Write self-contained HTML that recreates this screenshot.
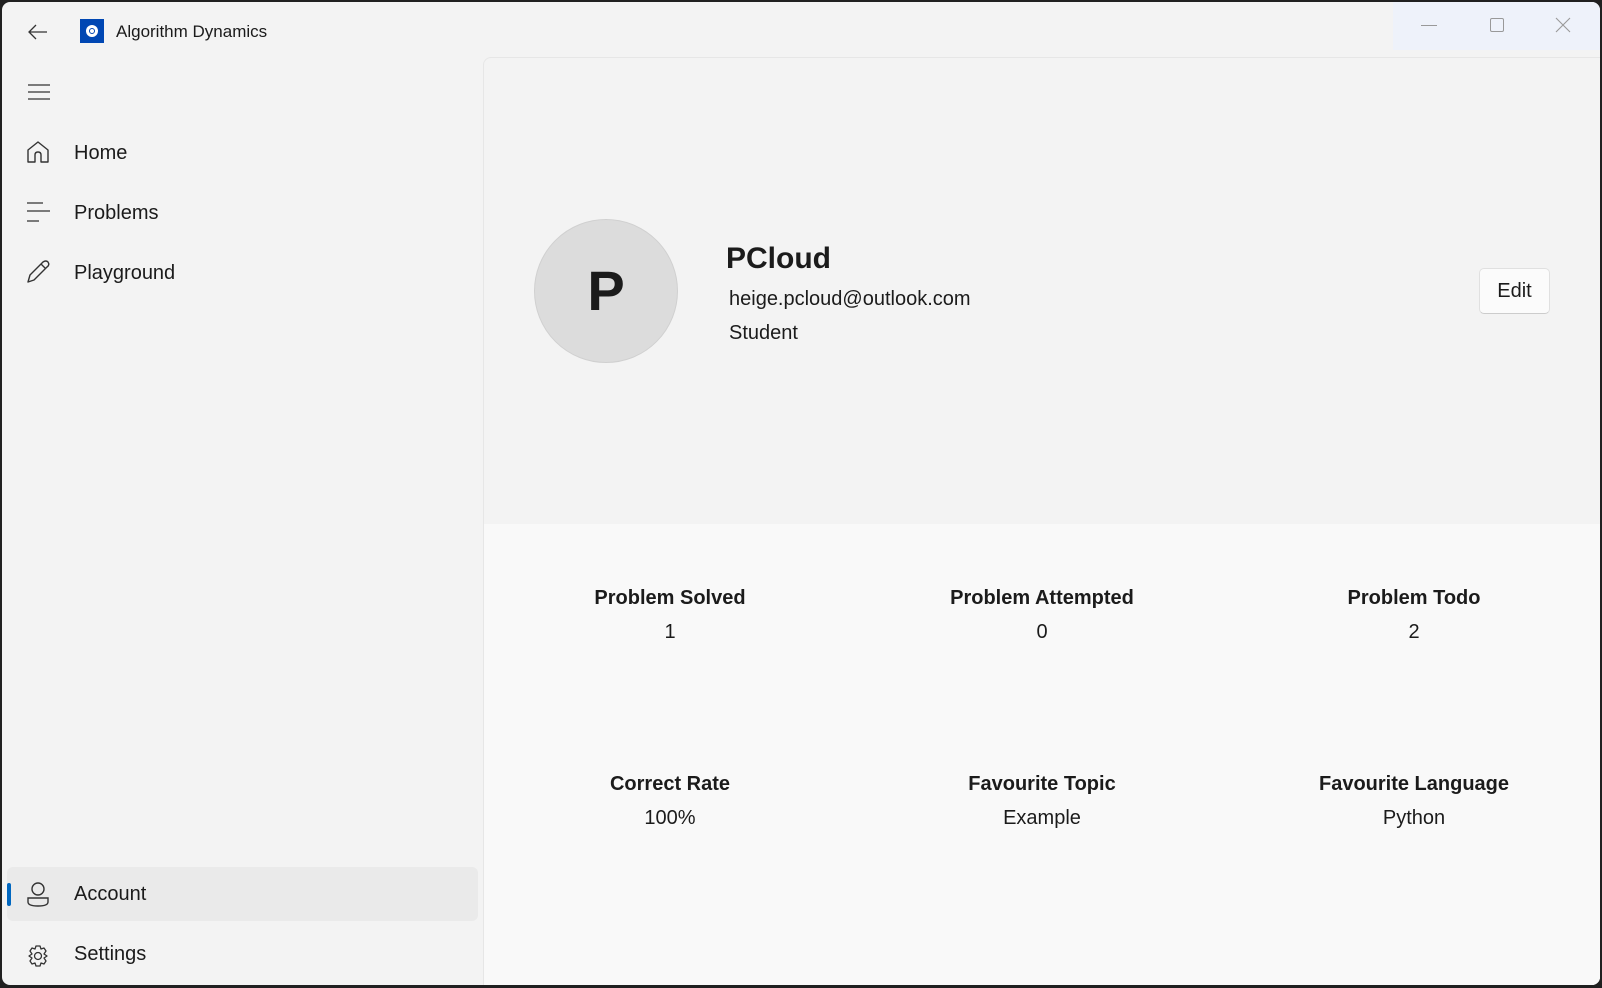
<!DOCTYPE html>
<html><head><meta charset="utf-8"><style>
*{margin:0;padding:0;box-sizing:border-box}
body{width:1602px;height:988px;background:#202020;position:relative;overflow:hidden;font-family:"Segoe UI","Liberation Sans",sans-serif;color:#1b1b1b}
.win{position:absolute;left:2px;top:2px;width:1598px;height:983px;background:#f3f3f3;border-radius:8px;overflow:hidden}
.abs{position:absolute}
.nav{position:absolute;left:72px;font-size:20px;color:#1b1b1b}
.ic{position:absolute}
.content{position:absolute;left:481px;top:55px;width:1120px;height:935px;background:#f3f3f3;border-top-left-radius:8px;border-left:1px solid #e6e6e6;border-top:1px solid #e6e6e6}
.lower{position:absolute;left:0;top:466px;width:100%;height:500px;background:#f9f9f9}
.stat{position:absolute;width:300px;text-align:center;font-size:20px}
.stat b{display:block;font-weight:600}
.stat span{display:block;margin-top:11px}
</style></head><body>
<div class="win">
 <div class="abs" style="left:1391px;top:0;width:207px;height:48px;background:#eef2fa"></div>
 <div class="abs" style="left:1419px;top:23px;width:16px;height:1px;background:#999"></div>
 <div class="abs" style="left:1488px;top:16px;width:14px;height:14px;border:1px solid #999;border-radius:2px"></div>
 <svg class="ic" style="left:1553px;top:15px" width="16" height="16"><path d="M1 1L15 15M15 1L1 15" stroke="#999" stroke-width="1.1"/></svg>
 <svg class="ic" style="left:26px;top:22px" width="20" height="16"><path d="M19 8H2M8 1L1 8L8 15" stroke="#333" stroke-width="1.3" fill="none"/></svg>
 <div class="abs" style="left:78px;top:17px;width:24px;height:24px;background:#0047b3"></div>
 <div class="abs" style="left:84px;top:23px;width:12px;height:12px;border-radius:50%;background:#fff"></div>
 <div class="abs" style="left:87px;top:26px;width:6px;height:6px;border-radius:50%;border:1.5px solid #0047b3"></div>
 <div class="abs" style="left:114px;top:20px;font-size:17px">Algorithm Dynamics</div>
 <svg class="ic" style="left:25px;top:80px" width="24" height="20"><path d="M1 3H23M1 10H23M1 17H23" stroke="#333" stroke-width="1.3"/></svg>
 <svg class="ic" style="left:24px;top:138px" width="24" height="24"><path d="M2 22V10L12 2L22 10V22H15V15Q15 12 12 12Q9 12 9 15V22Z" stroke="#333" stroke-width="1.4" fill="none" stroke-linejoin="round"/></svg>
 <div class="nav" style="top:140px">Home</div>
 <svg class="ic" style="left:23px;top:199px" width="26" height="22"><path d="M2 2H18M2 10H25M2 20H14" stroke="#333" stroke-width="1.3"/></svg>
 <div class="nav" style="top:200px">Problems</div>
 <svg class="ic" style="left:23px;top:257px" width="26" height="26"><path d="M3 23L5 16L18 3Q21 1 23 3Q25 6 22 8L9 21ZM16 5L21 10" stroke="#333" stroke-width="1.4" fill="none" stroke-linejoin="round"/></svg>
 <div class="nav" style="top:260px">Playground</div>
 <div class="abs" style="left:5px;top:865px;width:471px;height:54px;background:#eaeaea;border-radius:6px"></div>
 <div class="abs" style="left:5px;top:881px;width:4px;height:23px;background:#0067c0;border-radius:2px"></div>
 <svg class="ic" style="left:24px;top:880px" width="24" height="26"><circle cx="12" cy="7" r="6" stroke="#333" stroke-width="1.4" fill="none"/><path d="M2 16H22V20Q22 24 12 24Q2 24 2 20Z" stroke="#333" stroke-width="1.4" fill="none"/></svg>
 <div class="nav" style="top:881px">Account</div>
 <svg class="ic" style="left:24px;top:942px" width="24" height="24" viewBox="0 0 24 24"><path d="M10 2H14L15 5L18 4L20 7L18 10L21 12L18 14L20 17L18 20L15 19L14 22H10L9 19L6 20L4 17L6 14L3 12L6 10L4 7L6 4L9 5Z" stroke="#333" stroke-width="1.3" fill="none" stroke-linejoin="round"/><circle cx="12" cy="12" r="3.5" stroke="#333" stroke-width="1.3" fill="none"/></svg>
 <div class="nav" style="top:941px">Settings</div>
 <div class="content">
  <div class="abs" style="left:50px;top:161px;width:144px;height:144px;border-radius:50%;background:#dcdcdc;border:1px solid #d0d0d0;text-align:center;line-height:142px;font-size:56px;font-weight:600">P</div>
  <div class="abs" style="left:242px;top:184px;font-size:30px;font-weight:600">PCloud</div>
  <div class="abs" style="left:245px;top:230px;font-size:20px">heige.pcloud@outlook.com</div>
  <div class="abs" style="left:245px;top:264px;font-size:20px">Student</div>
  <div class="abs" style="left:995px;top:210px;width:71px;height:46px;background:#fbfbfb;border:1px solid #e0e0e0;border-bottom-color:#ccc;border-radius:5px;text-align:center;line-height:44px;font-size:20px">Edit</div>
  <div class="lower">
   <div class="stat" style="left:36px;top:63px"><b>Problem Solved</b><span>1</span></div>
   <div class="stat" style="left:408px;top:63px"><b>Problem Attempted</b><span>0</span></div>
   <div class="stat" style="left:780px;top:63px"><b>Problem Todo</b><span>2</span></div>
   <div class="stat" style="left:36px;top:249px"><b>Correct Rate</b><span>100%</span></div>
   <div class="stat" style="left:408px;top:249px"><b>Favourite Topic</b><span>Example</span></div>
   <div class="stat" style="left:780px;top:249px"><b>Favourite Language</b><span>Python</span></div>
  </div>
 </div>
</div>
</body></html>
